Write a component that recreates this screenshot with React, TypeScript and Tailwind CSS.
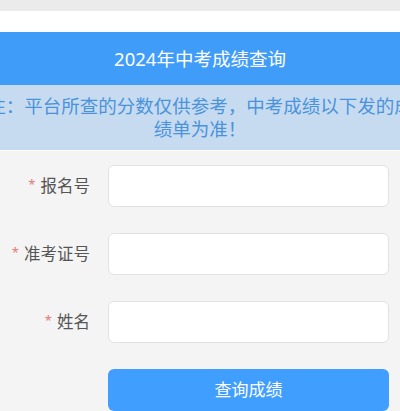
const font = { fontFamily: '"Noto Sans", "Noto Sans CJK SC", sans-serif' };

function Field({ label }: { label: string }) {
  return (
    <div className="flex items-center h-[42px]">
      <div className="w-[90px] shrink-0 flex items-center justify-end text-[16.5px] text-[#555]">
        <span className="text-[#e07a7a] text-[13px] mr-[5px] mt-[-2px]">*</span>
        {label}
      </div>
      <div className="ml-[18px] w-[281px] h-[42px] rounded-[6px] bg-white border border-[#e2e2e2]" />
    </div>
  );
}

export default function App() {
  return (
    <div className="w-[400px] h-[411px] overflow-hidden bg-[#f4f4f4]" style={font}>
      <div className="h-[11px] bg-[#ebebeb]" />
      <div className="h-[21px] bg-white" />
      <div className="h-[53px] bg-[#3f9cf9] flex items-center justify-center text-white text-[18.5px]">
        2024年中考成绩查询
      </div>
      <div className="h-[65px] bg-[#c7dbf0] overflow-hidden">
        <div className="-mx-[14px] pt-[9px] text-center text-[18.5px] leading-[23px] text-[#4a93dc]">
          注：平台所查的分数仅供参考，中考成绩以下发的成绩单为准！
        </div>
      </div>
      <div className="h-px bg-white" />
      <div className="pt-[14px] flex flex-col gap-[26px]">
        <Field label="报名号" />
        <Field label="准考证号" />
        <Field label="姓名" />
        <div className="flex">
          <button className="ml-[108px] w-[281px] h-[42px] rounded-[6px] bg-[#409eff] text-white text-[17px]">
            查询成绩
          </button>
        </div>
      </div>
    </div>
  );
}
